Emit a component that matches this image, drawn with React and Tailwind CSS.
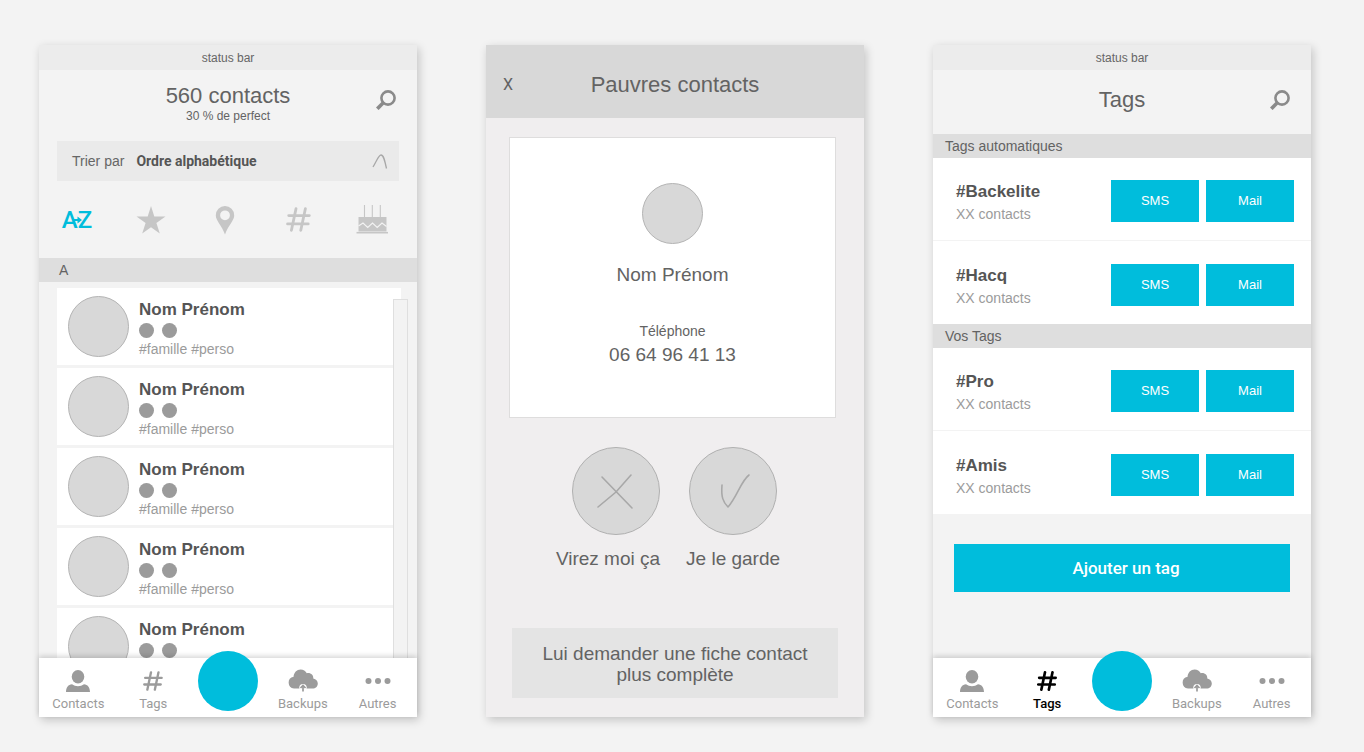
import { useState } from 'react';
import clsx from 'clsx';

const contacts = [
  { id: 1, name: 'Nom Prénom', tags: '#famille #perso' },
  { id: 2, name: 'Nom Prénom', tags: '#famille #perso' },
  { id: 3, name: 'Nom Prénom', tags: '#famille #perso' },
  { id: 4, name: 'Nom Prénom', tags: '#famille #perso' },
  { id: 5, name: 'Nom Prénom' },
];

const autoTags = [
  { name: '#Backelite', count: 'XX contacts' },
  { name: '#Hacq', count: 'XX contacts' },
];

const userTags = [
  { name: '#Pro', count: 'XX contacts' },
  { name: '#Amis', count: 'XX contacts' },
];

// --- Icons ---

function SearchIcon() {
  return (
    <svg viewBox="0 0 20 20" className="size-5" fill="none" stroke="currentColor" aria-hidden="true">
      <circle cx="12" cy="8" r="6.6" strokeWidth="2.6" />
      <path d="M7.500 12.500 1.300 18.800" strokeWidth="3.600" />
    </svg>
  );
}

function HashIcon({ className, strokeWidth = 2.7 }) {
  return (
    <svg viewBox="0 0 24 24" className={className} fill="none" stroke="currentColor" strokeWidth={strokeWidth} strokeLinecap="round" aria-hidden="true">
      <path d="M9.6 1.6 5.200 22.400M18.600 1.600 14.200 22.400M2.600 8.200h19.800M1.500 16.200h19.800" />
    </svg>
  );
}

function StarIcon() {
  return (
    <svg viewBox="0 0 30 28" className="h-7 w-[30px]" fill="currentColor" aria-hidden="true">
      <path d="M15 0 18.3 10.5H29.5L20.4 16.9 23.8 27.6 15 21.2 6.2 27.6 9.6 16.9.5 10.5H11.7Z" />
    </svg>
  );
}

function PinIcon() {
  return (
    <svg viewBox="0 0 20 30" className="h-[30px] w-5" fill="currentColor" aria-hidden="true">
      <path fillRule="evenodd" d="M10 1a9.2 9.2 0 0 1 9.2 9.4C19.2 15.6 13.4 20 10 29.4 6.6 20 .8 15.6.8 10.4A9.2 9.2 0 0 1 10 1Zm0 4.4a4.9 4.9 0 1 0 0 9.8 4.9 4.9 0 0 0 0-9.8Z" />
    </svg>
  );
}

function CakeIcon() {
  return (
    <svg viewBox="0 0 32 31" className="h-[31px] w-8" aria-hidden="true">
      <path d="M8.5 1v12M16.3 1v12M24.3 1v12" stroke="currentColor" strokeWidth="1.1" />
      <path d="M2.5 13h28v14.5h-28z" fill="currentColor" />
      <path d="M.5 28.7h31.500" stroke="currentColor" strokeWidth="1.6" />
      <path d="m2.500 22 4.500-3 4.700 4.500 4.800-4.500 4.700 4.500 4.800-4.500 4.500 3.500" fill="none" stroke="#f3f3f3" strokeWidth="1.100" />
    </svg>
  );
}

function PersonIcon() {
  return (
    <svg viewBox="0 0 24 22" className="h-[22px] w-6" fill="currentColor" aria-hidden="true">
      <ellipse cx="12" cy="6.700" rx="6.300" ry="6.700" />
      <path d="M0 22c.2-5 2.300-7.300 6-7.800 3.400 2.600 8.600 2.600 12 0 3.700.5 5.800 2.800 6 7.800Z" />
    </svg>
  );
}

function CloudIcon() {
  return (
    <svg viewBox="0 0 30 24" className="h-6 w-[30px]" aria-hidden="true">
      <path fill="currentColor" d="M6 19.500a5.900 5.900 0 0 1-.4-11.700C5.700 3.600 8.900.5 12.600.5c2.700 0 5 1.400 6.200 3.700 4-.7 6.700 1.800 6.500 5.200 2.700.5 4.500 2.500 4.500 5 0 3-2.300 5.100-5.200 5.100Z" />
      <circle cx="15" cy="18.600" r="3.700" fill="#fff" />
      <path d="M15 22.500v-6M12.500 19l2.500-2.600 2.500 2.600" fill="none" stroke="currentColor" strokeWidth="1.700" />
    </svg>
  );
}

function DotsIcon() {
  return (
    <svg viewBox="0 0 26 8" className="h-2 w-[26px]" fill="currentColor" aria-hidden="true">
      <circle cx="3.500" cy="4" r="3" />
      <circle cx="13" cy="4" r="3" />
      <circle cx="22.500" cy="4" r="3" />
    </svg>
  );
}

// --- Shared pieces ---

function Screen({ className, children }) {
  return (
    <section className={clsx('relative flex min-w-0 flex-col shadow-[2px_3px_9px_rgba(0,0,0,0.2)]', className)}>
      {children}
    </section>
  );
}

function TopBar({ title, subtitle }) {
  return (
    <>
      <p className="bg-[#ececec] pt-px text-center text-xs leading-6 text-[#666]">status bar</p>
      <header className="grid min-h-16 grid-cols-[1fr_auto_1fr] items-start pt-[14px] pr-[15px] pl-[15px]">
        <div className="col-start-2 text-center text-[#636363]">
          <h1 className={clsx('text-[22px]', subtitle ? 'leading-6' : 'leading-8')}>{title}</h1>
          {subtitle && <p className="text-xs leading-4">{subtitle}</p>}
        </div>
        <button type="button" aria-label="Rechercher" className="justify-self-end p-1.5 text-[#8a8a8a]">
          <SearchIcon />
        </button>
      </header>
    </>
  );
}

function SectionTitle({ className, children }) {
  return <h2 className={clsx('bg-[#dedede] text-sm leading-6 text-[#636363]', className)}>{children}</h2>;
}

function NavItem({ label, active, children }) {
  return (
    <a
      href="#"
      className={clsx('flex flex-col items-center pt-2 font-["Roboto",sans-serif] text-[13px]', active ? 'font-medium text-black' : 'text-[#9b9b9b]')}
    >
      <span className="flex h-[29px] items-center">{children}</span>
      <span className="leading-[18px]">{label}</span>
    </a>
  );
}

function BottomNav({ active }) {
  return (
    <nav className="relative grid h-[59px] shrink-0 grid-cols-5 bg-white px-0.5 shadow-[0_-2px_5px_rgba(0,0,0,0.16)]">
      <NavItem label="Contacts">
        <PersonIcon />
      </NavItem>
      <NavItem label="Tags" active={active === 'tags'}>
        <HashIcon className="size-5" strokeWidth={active === 'tags' ? 3.2 : 2.8} />
      </NavItem>
      <div className="flex justify-center">
        <button type="button" aria-label="Ajouter" className="-mt-[7px] size-[60px] shrink-0 rounded-full bg-[#00bddc]" />
      </div>
      <NavItem label="Backups">
        <CloudIcon />
      </NavItem>
      <NavItem label="Autres">
        <DotsIcon />
      </NavItem>
    </nav>
  );
}

function Avatar() {
  return <div className="size-[61px] shrink-0 rounded-full border border-[#b4b4b4] bg-[#d8d8d8]" />;
}

// --- Screens ---

function ContactsScreen() {
  const [sort, setSort] = useState('alpha');

  const sorts = [
    {
      id: 'alpha',
      label: 'Ordre alphabétique',
      icon: (
        <span className="relative flex font-['Roboto',sans-serif] text-2xl leading-7 font-medium">
          <span>A</span>
          <span>Z</span>
          <svg viewBox="0 0 8 8" className="absolute top-2.5 left-3 size-2" aria-hidden="true">
            <path d="M0 3h3.500V.5L8 4 3.500 7.500V5H0Z" fill="currentColor" />
          </svg>
        </span>
      ),
    },
    { id: 'favorites', label: 'Favoris', icon: <StarIcon /> },
    { id: 'place', label: 'Lieu', icon: <PinIcon /> },
    { id: 'tag', label: 'Tag', icon: <HashIcon className="size-[25px]" /> },
    { id: 'birthday', label: 'Anniversaire', icon: <CakeIcon /> },
  ];

  return (
    <Screen className="bg-[#f3f3f3]">
      <TopBar title="560 contacts" subtitle="30 % de perfect" />
      <button type="button" className="mx-[18px] mt-[7px] flex h-10 items-center bg-[#eaeaea] px-[15px] text-sm text-[#666]">
        <span>Trier par</span>
        <span className="ml-3 font-['Roboto',sans-serif] font-bold text-[#555]">Ordre alphabétique</span>
        <svg viewBox="0 0 16 16" className="mr-[-4px] ml-auto size-4" fill="none" stroke="#a8a8a8" strokeWidth="1.300" aria-hidden="true">
          <path d="M1 14C4.500 8.500 6.500 2 9 2s3.500 4 5.500 13.500" />
        </svg>
      </button>
      <div className="flex h-[77px] items-center justify-between pr-[29px] pl-[22px]">
        {sorts.map((item) => (
          <button
            key={item.id}
            type="button"
            aria-label={item.label}
            onClick={() => setSort(item.id)}
            className={clsx('flex h-8 w-8 items-center justify-center', sort === item.id ? 'text-[#00bddc]' : 'text-[#c6c6c6]')}
          >
            {item.icon}
          </button>
        ))}
      </div>
      <SectionTitle className="pl-5">A</SectionTitle>
      <div className="relative mt-[6px] min-h-0 flex-1 basis-0 overflow-hidden">
        <ul className="mr-4 ml-[18px] flex flex-col gap-[3px]">
          {contacts.map((contact) => (
            <li key={contact.id} className="flex h-[77px] shrink-0 items-start bg-white pt-2 pl-[11px]">
              <Avatar />
              <div className="ml-[10px] pt-px">
                <p className="text-[17px] leading-[25px] font-bold text-[#555]">{contact.name}</p>
                <div className="flex gap-2 py-px">
                  <span className="size-[15px] rounded-full bg-[#9b9b9b]" />
                  <span className="size-[15px] rounded-full bg-[#9b9b9b]" />
                </div>
                {contact.tags && <p className="text-sm leading-[21px] text-[#9b9b9b]">{contact.tags}</p>}
              </div>
            </li>
          ))}
        </ul>
        {/* Scroll index over the right edge of the list */}
        <div className="absolute top-[11px] right-[9px] bottom-0 w-[15px] border border-b-0 border-[#dfdfdf] bg-[#f3f3f3]" />
      </div>
      <BottomNav active="contacts" />
    </Screen>
  );
}

function ReviewScreen() {
  return (
    <Screen className="bg-[#f0eeef]">
      <header className="grid h-[73px] grid-cols-[1fr_auto_1fr] items-center bg-[#d8d8d8] pt-1.5 text-[#636363]">
        <button type="button" aria-label="Fermer" className="ml-[15px] justify-self-start px-0.5 font-['Roboto',sans-serif] text-base">
          X
        </button>
        <h1 className="text-[22px] leading-8">Pauvres contacts</h1>
      </header>
      <div className="mt-[19px] mr-[28px] ml-[23px] flex h-[281px] flex-col items-center border border-[#dedddd] bg-white pt-[45px] text-[19px] leading-6 text-[#636363]">
        <Avatar />
        <p className="mt-[19px]">Nom Prénom</p>
        <p className="mt-8 text-sm leading-6">Téléphone</p>
        <p>06 64 96 41 13</p>
      </div>
      <div className="mt-[29px] mr-[14px] flex justify-center gap-[26px] text-[19px] leading-6 text-[#636363]">
        <button type="button" className="flex flex-col items-end gap-3">
          <span className="flex size-[88px] items-center justify-center rounded-full border border-[#b0b0b0] bg-[#d8d8d8]">
            <svg viewBox="0 0 40 40" className="size-10" fill="none" stroke="#a8a8a8" strokeWidth="1.600" strokeLinecap="round" aria-hidden="true">
              <path d="M6 6 36 37M35 4 20 21 2 36" />
            </svg>
          </span>
          <span>Virez moi ça</span>
        </button>
        <button type="button" className="flex flex-col items-center gap-3">
          <span className="flex size-[88px] items-center justify-center rounded-full border border-[#b0b0b0] bg-[#d8d8d8]">
            <svg viewBox="0 0 40 40" className="size-10" fill="none" stroke="#a8a8a8" strokeWidth="1.600" strokeLinecap="round" strokeLinejoin="round" aria-hidden="true">
              <path d="M9 14C8 26 10 31 15 36 24 26 28 10 36 4" />
            </svg>
          </span>
          <span>Je le garde</span>
        </button>
      </div>
      <button type="button" className="mx-[26px] mt-[57px] mb-[19px] bg-[#e4e4e4] px-6 pt-[15px] pb-[13px] text-[19px] leading-[21px] text-[#636363]">
        Lui demander une fiche contact plus complète
      </button>
    </Screen>
  );
}

function TagList({ tags }) {
  return (
    <ul className="divide-y divide-[#f3f3f3] bg-white">
      {tags.map((tag) => (
        <li key={tag.name} className="flex h-[83px] items-center pt-1 pr-[17px] pl-[23px]">
          <div className="pt-1">
            <p className="text-[17px] leading-[22px] font-bold text-[#555]">{tag.name}</p>
            <p className="text-sm leading-[22px] text-[#9b9b9b]">{tag.count}</p>
          </div>
          <div className="ml-auto flex gap-[7px] text-[13px] text-white">
            <button type="button" className="h-[42px] w-[88px] bg-[#00bddc]">SMS</button>
            <button type="button" className="h-[42px] w-[88px] bg-[#00bddc]">Mail</button>
          </div>
        </li>
      ))}
    </ul>
  );
}

function TagsScreen() {
  return (
    <Screen className="bg-[#f3f3f3]">
      <TopBar title="Tags" />
      <SectionTitle className="pl-3">Tags automatiques</SectionTitle>
      <TagList tags={autoTags} />
      <SectionTitle className="pl-3">Vos Tags</SectionTitle>
      <TagList tags={userTags} />
      <button type="button" className="mx-[21px] mt-[30px] mb-auto h-12 bg-[#00bddc] pt-0.5 pl-2 font-['Roboto',sans-serif] text-[17px] font-medium text-white">
        Ajouter un tag
      </button>
      <BottomNav active="tags" />
    </Screen>
  );
}

export default function App() {
  return (
    <main className="min-h-screen bg-[#f3f3f3] pt-[45px] pr-[53px] pb-[34px] pl-[39px] font-['Liberation_Sans',Arial,sans-serif]">
      <div className="grid grid-cols-3 gap-[69px]">
        <ContactsScreen />
        <ReviewScreen />
        <TagsScreen />
      </div>
    </main>
  );
}
